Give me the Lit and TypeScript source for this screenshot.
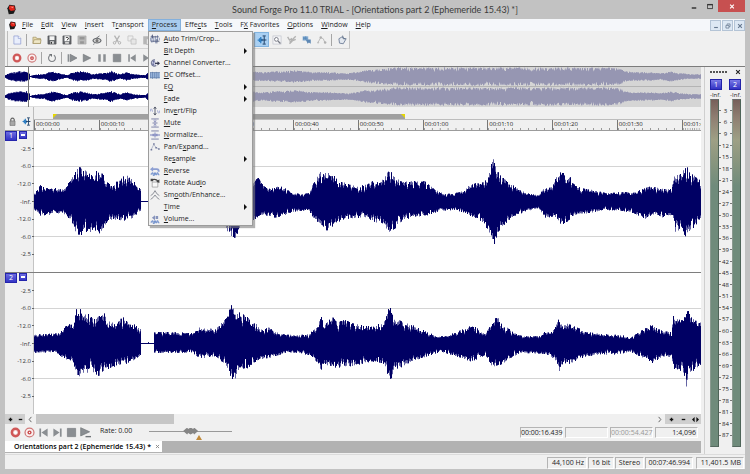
import { LitElement, html, svg, css, nothing, TemplateResult, SVGTemplateResult } from "lit";
import { customElement, property, state } from "lit/decorators.js";
import { classMap } from "lit/directives/class-map.js";

type Point = [number, number];

/* ---------- icons, all on a 16 x 16 grid ---------- */
const G = "#8a8e92";
const icons: Record<string, SVGTemplateResult> = {
  app: svg`<path d="M2 6 5 1l8 1 1 6-3 6-7 1z" fill="#1b1b1b"/><path d="M5 2l7 1 1 6-6 1-3-3z" fill="#e2231a"/><path d="M6 4l5 0-1 2z" fill="#ff8a7a"/>`,
  new: svg`<path d="M3 1.500h7l4 4v9H3z" fill="#e9eefc" stroke="#8191cc"/><path d="M10 1.500v4h4" fill="#fff" stroke="#8191cc"/>`,
  open: svg`<path d="M1.500 13.500V3.500h5l1 2h6v8z" fill="#e8dcae" stroke="#9a8a58"/><path d="M1.500 13.500l2-6h11l-1 6z" fill="#efe7c6" stroke="#9a8a58"/>`,
  save: svg`<path d="M1.500 1.500h13v13h-13z" fill="#65686c" stroke="#4a4c50"/><path d="M4 2h8v6H4z" fill="#f4f4f4"/><path d="M5 10h6v4H5z" fill="#d8d8d8"/><path d="M6 11h2v3H6z" fill="#333"/>`,
  saveAs: svg`<path d="M1.500 1.500h13v13h-13z" fill="#65686c" stroke="#4a4c50"/><path d="M4 2h8v8H4z" fill="#fff"/><path d="M6 4.500q2-2 4 0t-2 3M8 9v1" fill="none" stroke="#333" stroke-width="1.400"/><path d="M5 11h6v3H5z" fill="#d8d8d8"/>`,
  render: svg`<path d="M1.500 1.500h13v13h-13z" fill="#b8b8b8" stroke="#aaa"/><path d="M4 3h8v4H4zM5 10h6v4H5z" fill="#969696"/>`,
  gear: svg`<path d="M1.500 9c2-5 11-5 13 0-2 5-11 5-13 0z" fill="#ddd" stroke="#6a6d71" stroke-width="1.800"/><circle cx="8" cy="9" r="2.500" fill="#777"/><path d="M7 5l5-3.500M4 14l-2 1" stroke="#6a6d71" stroke-width="1.500"/>`,
  cut: svg`<path d="M4 1l6 10M12 1L6 11" stroke="#b2b2b2" stroke-width="2"/><circle cx="4" cy="12.500" r="2" fill="none" stroke="#b2b2b2" stroke-width="1.600"/><circle cx="12" cy="12.500" r="2" fill="none" stroke="#b2b2b2" stroke-width="1.600"/>`,
  copy: svg`<path d="M1.500 1.500h8v8h-8z" fill="#eee" stroke="#bcbcbc"/><path d="M6.500 6.500h8v8h-8z" fill="#e6e6e6" stroke="#b6b6b6"/>`,
  paste: svg`<path d="M2 2h11v13H2z" fill="#b6b6b6"/><path d="M7 6h8v9H7z" fill="#e8e8e8" stroke="#a8a8a8"/>`,
  editTool: svg`<path d="M1 8h2M4 5v6M6 3v10M8 6v4" stroke="#2f7fc4" stroke-width="2"/><path d="M9 1.500h5M9 14.500h5M11.500 2v12M7 8h8" stroke="#1d3f66" stroke-width="1.600" fill="none"/>`,
  magnify: svg`<rect x="1.500" y="1.500" width="13" height="13" fill="#f4f4f6" stroke="#b9bcc6"/><circle cx="7" cy="7" r="3" fill="#fff" stroke="#777a84" stroke-width="1.500"/><path d="M9.500 9.500l4 4" stroke="#777a84" stroke-width="2"/>`,
  pencil: svg`<path d="M1 3l3 5 3-2 1 4-4 4M14 2L4 12M9 9l5-2" fill="none" stroke="#b2b2b2" stroke-width="2.200"/>`,
  event: svg`<path d="M1 2h9v7H1z" fill="#8fb3d6"/><path d="M2 5h7M3 3v5M6 2v6" stroke="#3f77ad"/><path d="M6 7l8 0v7l-3-2-2 2z" fill="#5e88b4"/>`,
  envelope: svg`<path d="M1 13l5-9 4 2 3 7" fill="none" stroke="#b9b9b9" stroke-width="1.500"/><circle cx="6" cy="4" r="2" fill="#b0b0b0"/><circle cx="13" cy="12" r="2" fill="#b0b0b0"/><circle cx="2" cy="12" r="1.500" fill="#c0c0c0"/>`,
  script: svg`<path d="M3 6l5-3 6 4-4 7-6-1z" fill="#e3e8ef" stroke="#7d8ba2" stroke-width="1.600"/><path d="M9 1l1 5 5 0" fill="none" stroke="#5f6f88" stroke-width="1.500"/>`,
  rec: svg`<circle cx="8" cy="8" r="5.300" fill="#f6dede" stroke="#d05858" stroke-width="3.600"/><circle cx="8" cy="8" r="2.200" fill="#fff"/>`,
  recArm: svg`<circle cx="8" cy="8" r="6.500" fill="#faf0f0" stroke="#cf7878" stroke-width="1.800"/><circle cx="8" cy="8" r="3" fill="#c94a4a"/><circle cx="8" cy="8" r="1" fill="#fff"/>`,
  loop: svg`<path d="M5 3.500a5.500 5.500 0 1 0 6 0" fill="none" stroke="#7e8286" stroke-width="1.800"/><path d="M3 1.500h5v5z" fill="#6e7276"/>`,
  playAll: svg`<path d="M1 2h2.500v12H1z" fill=${G}/><path d="M5 2l11 6-11 6z" fill=${G} stroke="#707478"/>`,
  play: svg`<path d="M2 2l12 6-12 6z" fill=${G} stroke="#707478"/>`,
  pause: svg`<path d="M2 2h4v12H2zM10 2h4v12h-4z" fill=${G}/>`,
  stop: svg`<path d="M2 2h12v12H2z" fill=${G} stroke="#7a7e82"/>`,
  toStart: svg`<path d="M2 2h2.500v12H2zM14 2v12L5 8z" fill=${G}/>`,
  toEnd: svg`<path d="M11.500 2H14v12h-2.500zM2 2v12l9-6z" fill=${G}/>`,
  playLine: svg`<path d="M1 1l13 6-13 6z" fill=${G} stroke="#707478"/><path d="M8 14h8" stroke="#707478" stroke-width="2"/>`,
  lock: svg`<path d="M5 7V4q3-4 6 0v3" fill="none" stroke="#666" stroke-width="2"/><path d="M3.500 7h9v8h-9z" fill="#a8a8a8" stroke="#666"/>`,
  trim: svg`<path d="M1 6v5M3 2v12M6 4v9M9 3v12M12 2v10M15 6v4" stroke="#8a96b8" stroke-width="1.500"/><path d="M1 4.500h13M1 11.500h14M4 1v6M11 8v7" stroke="#4a5478" stroke-width="1.300" fill="none"/>`,
  channel: svg`<path d="M8 3a5 5 0 1 0 2 9" fill="#c9cce0" stroke="#767c98" stroke-width="1.800"/><circle cx="6" cy="6" r="1.500" fill="#6a70a0"/><circle cx="5" cy="10" r="1.500" fill="#6a70a0"/><path d="M8 8.500h5" stroke="#30344c" stroke-width="2"/><path d="M12 5l4 3.500-4 3.500z" fill="#30344c"/>`,
  dc: svg`<path d="M0 4h16v9H0z" fill="#9db8dc"/><path d="M1 4v9M4 3v11M7 4v9M10 3v11M13 4v9" stroke="#6f8dba" stroke-width="1.500"/><path d="M0 4h16M0 12.500h16" stroke="#5f7aa4"/>`,
  invert: svg`<path d="M0 9q2-9 4 0M12 7q2 9 4 0" fill="none" stroke="#8e96cc" stroke-width="1.300"/><path d="M8 2v12M6 4.500l2-3 2 3M6 11.500l2 3 2-3" fill="none" stroke="#3c4256" stroke-width="1.300"/>`,
  mute: svg`<path d="M2 1.500h12M2 14.500h12M4 8h8" stroke="#7076a0" stroke-width="1.400"/><path d="M8 2v4M8 10v4M6 4l2 3 2-3M6 12l2-3 2 3" fill="none" stroke="#8288b8" stroke-width="1.200"/>`,
  normalize: svg`<path d="M2 1.500h12M2 14.500h12" stroke="#7076a0" stroke-width="1.400"/><path d="M0 8h16M5 6v4M8 4v8M11 6v4" stroke="#7078b8" stroke-width="1.500"/>`,
  pan: svg`<path d="M2 12l4-8 4 5 4 2" fill="none" stroke="#9098b4"/><path d="M1 11h2.500v2.500H1zM5 2h2.500v2.500H5zM8.500 8H11v2.500H8.500zM13 10h2.500v2.500H13z" fill="#70789c"/>`,
  reverse: svg`<path d="M3 5h8q3 0 3 4" fill="none" stroke="#8d9fd2" stroke-width="3"/><path d="M5 1v8L0 5z" fill="#8d9fd2"/><path d="M1 13h2v-2h2v4h2v-4h2v3h2v-3h2v3h2" fill="none" stroke="#4f78c4" stroke-width="1.300"/>`,
  rotate: svg`<path d="M3.500 6.500h9v8h-9z" fill="#f8f8f8" stroke="#8a8a8a"/><path d="M2 4q6-4 11 1" fill="none" stroke="#444" stroke-width="2"/><path d="M15 2v6l-5-2zM1 1h4v4H1z" fill="#444"/>`,
  smooth: svg`<path d="M1 9l4-3 3-5 3 5 4 3M1 15l4-3 3-4 3 4 4 3" fill="none" stroke="#878c94" stroke-width="1.500"/>`,
  volume: svg`<path d="M3 6l5-4v8zM9 3h4v5H9z" fill="#8794bc"/><path d="M1 13h2v-2h2v4h2v-4h2v3h2v-3h2v3h2" fill="none" stroke="#4f78c4" stroke-width="1.300"/>`,
  plus: svg`<path d="M8 4v8M4 8h8" stroke="#111" stroke-width="3"/>`,
  minus: svg`<path d="M4 8h8" stroke="#111" stroke-width="3"/>`,
  left: svg`<path d="M10 2L5 8l5 6" fill="none" stroke="#555" stroke-width="2"/>`,
  right: svg`<path d="M6 2l5 6-5 6" fill="none" stroke="#555" stroke-width="2"/>`,
  fit: svg`<path d="M6 2v12L0 8zM10 2v12l6-6z" fill="#111"/>`,
  minimize: svg`<path d="M2 12h12" stroke="#222" stroke-width="3.500"/>`,
  maximize: svg`<path d="M1 2.500h14v11H1z" fill="none" stroke="#222" stroke-width="2"/><path d="M1 3.500h14" stroke="#222" stroke-width="2.500"/>`,
  close: svg`<path d="M3 3l10 10M13 3L3 13" stroke="currentColor" stroke-width="3"/>`,
  restore: svg`<path d="M5.500 5V2.500h8v7H11" fill="none" stroke="#66788f" stroke-width="2"/><path d="M2.500 6.500h8v7h-8z" fill="none" stroke="#66788f" stroke-width="2"/>`,
  childMin: svg`<path d="M3 12h10" stroke="#66788f" stroke-width="3"/>`,
  none: svg``,
};

const icon = (name: string) =>
  html`<svg class="icon" viewBox="0 0 16 16" aria-hidden="true">${icons[name]}</svg>`;

/* Renders "In&vert" with the letter after the ampersand underlined. */
const keyed = (label: string) => {
  const at = label.indexOf("&");
  return at < 0
    ? html`${label}`
    : html`${label.slice(0, at)}<u>${label[at + 1]}</u>${label.slice(at + 2)}`;
};

const shared = css`
  * { box-sizing: border-box; }
  button {
    font: inherit; color: inherit; background: none; border: 0; padding: 0; margin: 0;
    display: flex; align-items: center; justify-content: center;
  }
  .icon { width: 11px; height: 11px; display: block; flex: none; }
  u { text-underline-offset: 1px; text-decoration-thickness: 1px; }
`;

/* ---------- waveform ---------- */
@customElement("wave-form")
export class WaveForm extends LitElement {
  @property({ attribute: false }) up: Point[] = [];
  @property({ attribute: false }) down: Point[] = [];
  @property({ type: Number }) from = 0;
  @property({ type: Number }) to = 100;
  @property({ type: Number }) reach = 70;
  @property({ type: Number }) seed = 1;
  @property({ type: Number }) jitter = 0.26;

  static styles = css`
    :host { display: block; }
    svg { display: block; width: 100%; height: 100%; }
    .soft { fill: var(--wave-soft, #6464a4); }
    .core { fill: var(--wave-core, #000064); }
  `;

  private level(points: Point[], x: number) {
    for (let i = 1; i < points.length; i++) {
      const [x0, y0] = points[i - 1];
      const [x1, y1] = points[i];
      if (x <= x1) return x1 === x0 ? y1 : y0 + ((y1 - y0) * (x - x0)) / (x1 - x0);
    }
    return points.length ? points[points.length - 1][1] : 0;
  }

  render() {
    let s = this.seed * 7919;
    const rand = () => ((s = (s * 16807) % 2147483647) / 2147483647);
    const low = this.down.length ? this.down : this.up;
    let core = "";
    let soft = "";
    for (let x = this.from; x < this.to; x++) {
      const u = this.level(this.up, x);
      const d = this.level(low, x);
      const a = u * (1 - this.jitter * rand() * rand() * 1.6);
      const b = d * (1 - this.jitter * rand() * rand() * 1.6);
      const ca = a * (rand() > 0.6 ? 0.84 : 1);
      const cb = b * (rand() > 0.6 ? 0.84 : 1);
      soft += `M${x} ${(-a - 0.4).toFixed(1)}h1V${(b + 0.4).toFixed(1)}h-1z`;
      core += `M${x} ${(-ca - 0.4).toFixed(1)}h1.02V${(cb + 0.4).toFixed(1)}h-1.02z`;
    }
    const box = `${this.from} ${-this.reach} ${this.to - this.from} ${this.reach * 2}`;
    return html`<svg viewBox=${box} preserveAspectRatio="none" aria-hidden="true">
      <path class="soft" d=${soft}></path><path class="core" d=${core}></path>
    </svg>`;
  }
}

const track1Up: Point[] = [[35,9],[40,16],[46,13],[55,13],[60,12],[66,15],[72,24],[76,31],[79,34],[84,31],[88,29],[92,26],[98,33],[103,26],[107,19],[112,16],[118,21],[125,26],[132,23],[136,15],[140,13],[141,0],[153,0],[154,10],[180,12],[200,14],[222,22],[231,36],[240,28],[251,19],[258,24],[263,15],[270,12],[282,16],[290,9],[300,7],[308,8],[313,18],[320,30],[328,28],[335,26],[340,20],[348,17],[358,14],[365,17],[372,20],[380,19],[385,27],[390,31],[394,24],[402,19],[412,20],[425,20],[434,12],[444,8],[452,7],[462,10],[470,17],[478,18],[484,19],[488,25],[491,38],[493,44],[496,34],[499,27],[504,22],[511,17],[520,11],[530,7],[538,6],[543,12],[552,14],[557,28],[562,30],[566,22],[570,24],[575,15],[585,12],[596,11],[605,8],[622,9],[635,9],[643,13],[652,15],[658,13],[668,12],[671,12],[674,28],[680,27],[685,35],[690,31],[695,24],[701,20]];
const track1Down: Point[] = [[35,9],[40,14],[50,13],[62,11],[70,18],[75,30],[78,35],[84,31],[88,32],[94,28],[98,33],[103,26],[108,18],[118,18],[125,19],[132,18],[137,13],[140,9],[141,0],[153,0],[154,10],[200,14],[222,24],[229,32],[234,37],[238,32],[245,22],[255,17],[264,13],[275,16],[283,14],[292,10],[308,8],[313,16],[320,23],[327,29],[333,24],[340,19],[352,17],[364,15],[374,20],[383,24],[388,30],[392,32],[398,21],[410,16],[425,14],[440,9],[455,8],[470,14],[482,20],[490,32],[494,43],[498,30],[503,24],[512,15],[525,10],[538,6],[545,16],[554,15],[560,23],[566,21],[575,13],[590,11],[605,8],[630,10],[645,17],[655,12],[663,16],[672,13],[675,30],[680,28],[685,34],[692,28],[701,16]];
const track2Up: Point[] = [[35,9],[45,9],[58,10],[65,17],[74,21],[76,34],[79,36],[83,26],[87,31],[92,25],[98,27],[104,31],[107,22],[115,21],[123,26],[128,20],[136,18],[140,14],[141,0],[147,0],[148,1],[149,0],[153,0],[154,11],[170,11],[192,10],[199,16],[215,14],[225,24],[231,38],[234,34],[240,30],[248,26],[256,19],[262,13],[268,16],[280,9],[295,8],[308,9],[317,16],[319,32],[321,31],[323,18],[332,26],[338,22],[345,23],[355,19],[372,17],[384,22],[388,35],[391,35],[393,24],[402,22],[413,18],[425,12],[436,7],[446,7],[458,12],[472,18],[484,10],[492,21],[497,27],[500,20],[508,15],[516,9],[525,7],[540,7],[544,11],[552,11],[556,20],[558,24],[562,17],[567,20],[575,16],[588,11],[600,9],[622,8],[630,5],[640,12],[651,18],[662,12],[671,11],[673,28],[680,23],[684,26],[686,36],[690,30],[695,23],[701,20]];
const track2Down: Point[] = [[35,9],[55,8],[62,14],[72,18],[76,28],[78,38],[82,28],[86,34],[90,26],[99,33],[104,26],[112,24],[122,21],[132,18],[140,13],[141,0],[153,0],[154,9],[192,9],[200,15],[215,12],[224,20],[230,32],[234,38],[238,27],[248,24],[258,16],[270,14],[285,9],[300,9],[312,13],[318,21],[320,31],[323,20],[337,24],[352,22],[370,18],[384,20],[388,34],[390,40],[393,26],[398,25],[410,18],[425,13],[440,8],[455,12],[472,18],[485,11],[492,23],[500,22],[510,14],[520,9],[540,10],[550,12],[556,19],[559,27],[563,19],[569,21],[578,15],[595,11],[615,11],[630,8],[645,15],[652,19],[662,13],[671,13],[674,26],[680,27],[685,34],[686,43],[688,30],[694,26],[701,20]];
const overview: Point[] = [[5,1],[8,3],[12,4],[17,5],[22,5],[27,5],[29,3],[30,0],[32,1],[38,2],[44,2],[48,4],[52,5],[56,4],[62,2],[67,1],[72,4],[80,5],[87,4],[92,2],[102,3],[107,4],[111,6],[116,3],[120,2],[126,4],[133,2],[145,1],[147,3],[170,4],[200,3],[252,5],[262,4],[275,5],[295,6],[315,4],[330,4],[345,3],[355,4],[365,6],[375,7],[385,8],[395,9],[440,9],[460,9],[529,9],[531,6],[533,9],[610,9],[620,8],[625,5],[635,4],[650,4],[660,3],[671,5],[680,3],[690,2],[701,2]];

/* ---------- level meter ---------- */
@customElement("level-meter")
export class LevelMeter extends LitElement {
  static styles = [shared, css`
    :host {
      display: flex; flex-direction: column; padding: 2px 4px 7px 5px;
      border-left: 1px solid #cfcfcf; font-size: 6px; line-height: 8px; color: #222;
    }
    .head { display: flex; justify-content: space-between; align-items: center; height: 6px; }
    .grip { width: 18px; height: 2px; background: repeating-linear-gradient(90deg, #555 0 2px, transparent 2px 3px); }
    .head .icon { width: 6px; height: 6px; }
    .channels { display: flex; justify-content: space-between; margin-top: 4px; }
    .channels button { width: 12px; height: 11px; color: #fff; border: 1px solid #2222a8; background: linear-gradient(#7a7ae6, #3333c4); font-size: 7px; }
    .peaks { display: flex; justify-content: space-between; height: 8px; margin-top: 1px; }
    .meters { flex: 1; display: flex; }
    .bar {
      width: 9px; border: 1px solid; border-color: #6a6a6a #4e6458 #55695f #8a9a90;
      background: linear-gradient(#77605a, #8f7f72 18px, #9ea085 40px, #8c977f 58px, #6f8b7b 86px, #6f8b7b);
    }
    ol { flex: 1; list-style: none; margin: 0; padding: 6px 0; display: flex; flex-direction: column; }
    li { flex: 1; display: flex; align-items: center; justify-content: space-between; min-height: 0; }
    li::before, li::after { content: ""; width: 2px; height: 1px; background: #777; }
  `];

  render() {
    const marks = Array.from({ length: 29 }, (_, i) => (i + 1) * 3);
    return html`
      <div class="head"><span class="grip"></span><button aria-label="Close meters">${icon("close")}</button></div>
      <div class="channels"><button>1</button><button>2</button></div>
      <div class="peaks"><span>-Inf.</span><span>-Inf.</span></div>
      <div class="meters">
        <div class="bar"></div>
        <ol>${marks.map((m) => html`<li>${m}</li>`)}</ol>
        <div class="bar"></div>
      </div>`;
  }
}

interface MenuEntry { label: string; icon?: string; sub?: boolean }
const processMenu: MenuEntry[] = [
  { label: "&Auto Trim/Crop...", icon: "trim" },
  { label: "&Bit Depth", sub: true },
  { label: "&Channel Converter...", icon: "channel" },
  { label: "&DC Offset...", icon: "dc" },
  { label: "E&Q", sub: true },
  { label: "&Fade", sub: true },
  { label: "Inv&ert/Flip", icon: "invert" },
  { label: "&Mute", icon: "mute" },
  { label: "&Normalize...", icon: "normalize" },
  { label: "Pan/E&xpand...", icon: "pan" },
  { label: "Re&sample", sub: true },
  { label: "&Reverse", icon: "reverse" },
  { label: "Rotate Aud&io", icon: "rotate" },
  { label: "Sm&ooth/Enhance...", icon: "smooth" },
  { label: "&Time", sub: true },
  { label: "&Volume...", icon: "volume" },
];
const menus = ["&File", "&Edit", "&View", "&Insert", "T&ransport", "&Process", "Effe&cts", "&Tools", "F&X Favorites", "&Options", "&Window", "&Help"];

const fileTools = ["new", "|", "open", "save", "saveAs", "render", "gear", "|", "cut", "copy", "paste", "none", "none", "|", "none", "none", "none", "|", "none", "editTool", "magnify", "pencil", "event", "envelope", "|", "script"];
const transport = ["rec", "recArm", "|", "loop", "|", "playAll", "play", "pause", "stop", "toStart", "toEnd"];

@customElement("app-root")
export class AppRoot extends LitElement {
  @state() private openMenu = "&Process";

  static styles = [shared, css`
    :host {
      display: flex; flex-direction: column; min-height: 100vh; box-sizing: border-box;
      padding: 0 5px 5px; background: #c2c2c2;
      font: 7px/10px "Open Sans", "Noto Sans", sans-serif; color: #1c1c1c;
    }
    .title { display: grid; grid-template-columns: 82px 1fr 82px; height: 19px; align-items: center; }
    .title h1 { margin: 0; font: 400 9px/12px Lato, "Open Sans", sans-serif; text-align: center; color: #3a3a3a; white-space: nowrap; }
    .title .brand { padding-left: 1px; }
    .window { display: flex; justify-content: flex-end; align-self: start; }
    .window button { width: 16px; height: 12px; }
    .window .icon { width: 6px; height: 7px; }
    .window .shut { width: 27px; background: #c75050; color: #fff; }

    .menubar { display: flex; height: 12px; background: #f5f7fa; padding-left: 3px; }
    .menubar .mark { display: flex; align-items: center; width: 10px; }
    .menubar .mark .icon { width: 9px; height: 9px; }
    .entry { position: relative; display: flex; }
    .entry > button { padding: 0 3px; border: 1px solid transparent; white-space: nowrap; }
    .entry > button.open { background: #a8cbee; border-color: #84b0dc; }
    .child { display: flex; margin-left: auto; }
    .child button { width: 11px; height: 11px; margin: 1px 0 0 1px; border: 1px solid #b4c4d6; background: #dde8f4; color: #66788f; }
    .child .icon { width: 6px; height: 6px; }

    .dropdown {
      position: absolute; z-index: 2; top: 100%; left: 0; width: 105px; margin: 0; padding: 1px 0 0; list-style: none;
      background: #f1f1f1; border: 1px solid #9c9c9c; box-shadow: 2px 2px 1px #7d7d7d99;
    }
    .dropdown button { display: grid; grid-template-columns: 15px 1fr 8px; width: 100%; height: 12px; text-align: left; white-space: nowrap; align-items: center; }
    .dropdown .icon { width: 10px; height: 10px; margin-left: 1px; }
    .caret { width: 0; height: 0; border: solid transparent; border-width: 3px 0 3px 3px; border-left-color: #111; }

    .bar { display: flex; background: #f0f0f0; padding-left: 2px; }
    .tools { display: flex; align-items: center; height: 18px; padding-left: 1px; border-left: 1px solid #bdbdbd; border-right: 1px solid #c4c4c4; border-bottom: 1px solid #d2d2d2; }
    .tools.low { height: 17px; border-right: 0; border-bottom: 0; }
    .tools button { width: 15px; height: 15px; }
    .tools .icon { width: 10px; height: 10px; }
    .tools button.active { background: #a9d0f3; border: 1px solid #82b4e0; }
    .sep { width: 1px; height: 12px; margin: 0 2px; background: #a6a6a6; }

    .body { display: flex; flex: 1; border-top: 1px solid #7c7c7c; background: #f0f0f0; }
    .editor { flex: 1; min-width: 0; display: flex; flex-direction: column; }
    level-meter { width: 41px; margin-left: 3px; }

    .overview { display: grid; grid-template-columns: 24px 172px 1fr; height: 40px; background: #fff; border-bottom: 1px solid #dedede; }
    .part { border-right: 1px solid #777; display: grid; grid-template-rows: 1fr 1fr; min-width: 0; }
    .part + .part { border-right: 0; }
    .part wave-form { min-height: 0; height: 19px; }
    .part wave-form:first-child { border-bottom: 1px solid #b4b4b4; height: 20px; }
    .part.rest { background: #d5d5d5; --wave-core: #9696b2; --wave-soft: #b2b2c4; }

    .timeline { display: grid; grid-template-columns: 29px 1fr; height: 24px; border-bottom: 1px solid #9c9c9c; }
    .corner { display: flex; align-items: center; justify-content: space-around; padding-top: 6px; border-right: 1px solid #bcbcbc; }
    .corner .icon { width: 9px; height: 9px; }
    .range { display: grid; grid-template-columns: 19fr 352fr 296fr; height: 13px; align-items: end; border-bottom: 1px solid #bdbdbd; }
    .selection { grid-column: 2; height: 5px; background: #a0a0a0; display: flex; justify-content: space-between; }
    .flag { width: 0; height: 0; border: 2px solid #e6d800; border-right-color: transparent; border-bottom-color: transparent; }
    .flag.end { border-right-color: #e6d800; border-left-color: transparent; }
    .ruler { display: grid; grid-template-columns: repeat(10, 647fr) 194fr; height: 10px; overflow: hidden; }
    .ruler span {
      min-width: 0; overflow: hidden; white-space: nowrap; border-left: 1px solid #777; padding-left: 1px; font-size: 6px; line-height: 8px;
      background: linear-gradient(90deg, #999 1px, transparent 1px) 0 100% / 12.5% 2px repeat-x;
    }

    .track { display: grid; grid-template-columns: 29px 1fr; height: 141px; }
    .track + .track { height: 142px; border-top: 1px solid #7e7e7e; }
    .scale { display: grid; grid-template-columns: 29px; border-right: 1px solid #c4c4c4; }
    .scale > * { grid-area: 1 / 1; }
    .chan { display: flex; align-items: flex-start; gap: 2px; }
    .chan button { color: #fff; border: 1px solid #2424ac; background: linear-gradient(#6c6ce0, #3434c6); width: 12px; height: 10px; }
    .chan button + button { width: 8px; height: 8px; }
    .chan i { width: 4px; height: 2px; background: #fff; }
    .db { display: flex; flex-direction: column; margin: 0; padding: 9px 0; list-style: none; font-size: 6px; line-height: 8px; color: #333; }
    .db li { flex: 1; display: flex; align-items: center; justify-content: flex-end; gap: 1px; }
    .db li::after { content: ""; width: 2px; height: 1px; background: #666; }
    .lane {
      display: grid; min-width: 0;
      background: linear-gradient(#d4d4d4 0 0) 0 25% / 100% 1px no-repeat, linear-gradient(#d4d4d4 0 0) 0 75% / 100% 1px no-repeat, #fff;
    }
    .lane wave-form { height: 141px; }

    .scroll { display: flex; height: 10px; align-items: stretch; background: #f0f0f0; }
    .scroll .icon { width: 7px; height: 7px; }
    .zoom { display: flex; background: #cfcfcf; }
    .zoom button { width: 10px; }
    .zoom.wide button { width: 12px; }
    .scroll > button { width: 11px; }
    .groove { flex: 1; display: grid; grid-template-columns: 138fr 482fr; }
    .thumb { background: #c6c6c6; }

    .deck { display: flex; align-items: center; height: 17px; padding-left: 3px; }
    .deck > button { width: 14px; height: 15px; }
    .rate { display: flex; align-items: center; margin: 2px 0 0 8px; gap: 17px; height: 10px; align-self: flex-start; }
    .dial { display: grid; width: 83px; }
    input[type="range"] { appearance: none; width: 100%; height: 8px; margin: 0; background: linear-gradient(#999 0 0) 0 50% / 100% 1px no-repeat; }
    input[type="range"]::-webkit-slider-thumb {
      appearance: none; width: 15px; height: 7px; background: #858585;
      clip-path: polygon(0 50%, 27% 0, 33% 20%, 50% 0, 67% 20%, 73% 0, 100% 50%, 73% 100%, 67% 80%, 50% 100%, 33% 80%, 27% 100%);
    }
    .unity { position: absolute; margin: 8px 0 0 47px; border: 3px solid transparent; border-top: 0; border-bottom: 5px solid #c08a3c; }
    .times { display: flex; gap: 2px; margin-left: auto; padding-right: 3px; }
    .times output, .status span { border: 1px solid; border-color: #b4b4b4 #fff #fff #b4b4b4; text-align: right; white-space: nowrap; }
    .times output { width: 43px; height: 11px; line-height: 9px; padding-right: 1px; }
    .times output.dim { color: #999; }

    .tabs { display: flex; height: 12px; background: #b2b2b2; }
    .tab { display: flex; align-items: center; gap: 4px; padding: 0 2px 0 9px; background: #fff; font-weight: 600; color: #000; white-space: nowrap; height: 11px; }
    .tab .icon { width: 5px; height: 5px; color: #8a8a8a; }

    .status { display: flex; justify-content: flex-end; gap: 1px; height: 15px; padding: 2px 1px 0 0; background: #f0f0f0; border-top: 1px solid #dcdcdc; }
    .status span { height: 12px; padding: 0 2px; }
    .s1 { width: 40px; } .s4 { width: 48px; }
    .status .s2 { width: 26px; text-align: center; }
    .status .s3 { width: 29px; text-align: center; }
    .status .s5 { width: 48px; margin-left: 2px; }
  `];

  private tool(name: string): TemplateResult {
    return name === "|"
      ? html`<span class="sep"></span>`
      : html`<button class=${classMap({ active: name === "editTool" })} aria-label=${name}>${icon(name)}</button>`;
  }

  private dropdown() {
    return html`<ul class="dropdown" role="menu">
      ${processMenu.map((e) => html`<li role="none">
        <button role="menuitem">${icon(e.icon ?? "none")}<span>${keyed(e.label)}</span>${e.sub ? html`<span class="caret"></span>` : nothing}</button>
      </li>`)}
    </ul>`;
  }

  private track(n: number, up: Point[], down: Point[]) {
    const marks = ["-2.5", "-6.0", "-12.0", "-Inf.", "-12.0", "-6.0", "-2.5"];
    return html`<div class="track">
      <div class="scale">
        <ul class="db">${marks.map((m) => html`<li>${m}</li>`)}</ul>
        <div class="chan"><button>${n}</button><button aria-label="Minimize channel"><i></i></button></div>
      </div>
      <div class="lane"><wave-form .up=${up} .down=${down} from="34" to="701" reach="70" seed=${n + 4}></wave-form></div>
    </div>`;
  }

  private part(name: string, from: number, to: number) {
    return html`<div class="part ${name}">
      ${[3, 8].map((seed) => html`<wave-form .up=${overview} from=${from} to=${to} reach="10" seed=${seed}></wave-form>`)}
    </div>`;
  }

  render() {
    return html`
      <header class="title">
        <span class="brand">${icon("app")}</span>
        <h1>Sound Forge Pro 11.0 TRIAL - [Orientations part 2 (Ephemeride 15.43) *]</h1>
        <div class="window">
          <button aria-label="Minimize">${icon("minimize")}</button>
          <button aria-label="Maximize">${icon("maximize")}</button>
          <button class="shut" aria-label="Close">${icon("close")}</button>
        </div>
      </header>
      <nav class="menubar">
        <span class="mark">${icon("app")}</span>
        ${menus.map((m) => html`<div class="entry">
          <button class=${classMap({ open: m === this.openMenu })}
            @click=${() => (this.openMenu = this.openMenu === m ? "" : m)}><span>${keyed(m)}</span></button>
          ${m === "&Process" && this.openMenu === m ? this.dropdown() : nothing}
        </div>`)}
        <div class="child">
          <button aria-label="Minimize document">${icon("childMin")}</button>
          <button aria-label="Restore document">${icon("restore")}</button>
          <button aria-label="Close document">${icon("close")}</button>
        </div>
      </nav>
      <div class="bar"><div class="tools">${fileTools.map((t) => this.tool(t))}</div></div>
      <div class="bar"><div class="tools low">${transport.map((t) => this.tool(t))}</div></div>
      <main class="body">
        <section class="editor">
          <div class="overview">
            ${this.part("", 5, 29)}${this.part("", 29, 201)}${this.part("rest", 201, 701)}
          </div>
          <div class="timeline">
            <div class="corner">${icon("lock")}${icon("editTool")}</div>
            <div>
              <div class="range"><div class="selection"><i class="flag"></i><i class="flag end"></i></div></div>
              <div class="ruler">
                ${Array.from({ length: 11 }, (_, i) => html`<span>00:0${Math.floor(i / 6)}:${i % 6}0</span>`)}
              </div>
            </div>
          </div>
          ${this.track(1, track1Up, track1Down)}
          ${this.track(2, track2Up, track2Down)}
          <div class="scroll">
            <div class="zoom">
              <button aria-label="Zoom in vertically">${icon("plus")}</button>
              <button aria-label="Zoom out vertically">${icon("minus")}</button>
            </div>
            <button aria-label="Scroll left">${icon("left")}</button>
            <div class="groove"><div class="thumb"></div></div>
            <button aria-label="Scroll right">${icon("right")}</button>
            <div class="zoom wide">
              <button aria-label="Zoom in">${icon("plus")}</button>
              <button aria-label="Zoom out">${icon("minus")}</button>
              <button aria-label="Fit">${icon("fit")}</button>
            </div>
          </div>
          <div class="deck">
            ${["rec", "recArm", "toStart", "toEnd", "stop", "playLine"].map((t) => this.tool(t))}
            <div class="rate">
              <label for="rate">Rate: 0.00</label>
              <div class="dial">
                <input id="rate" type="range" min="-10" max="10" value="0" />
                <i class="unity"></i>
              </div>
            </div>
            <div class="times">
              <output>00:00:16.439</output><output></output>
              <output class="dim">00:00:54.427</output><output>1:4,096</output>
            </div>
          </div>
          <div class="tabs">
            <div class="tab">Orientations part 2 (Ephemeride 15.43) * <button aria-label="Close tab">${icon("close")}</button></div>
          </div>
        </section>
        <level-meter></level-meter>
      </main>
      <footer class="status">
        <span class="s1">44,100 Hz</span><span class="s2">16 bit</span><span class="s3">Stereo</span>
        <span class="s4">00:07:46.994</span><span class="s5">11,401.5 MB</span>
      </footer>`;
  }
}
